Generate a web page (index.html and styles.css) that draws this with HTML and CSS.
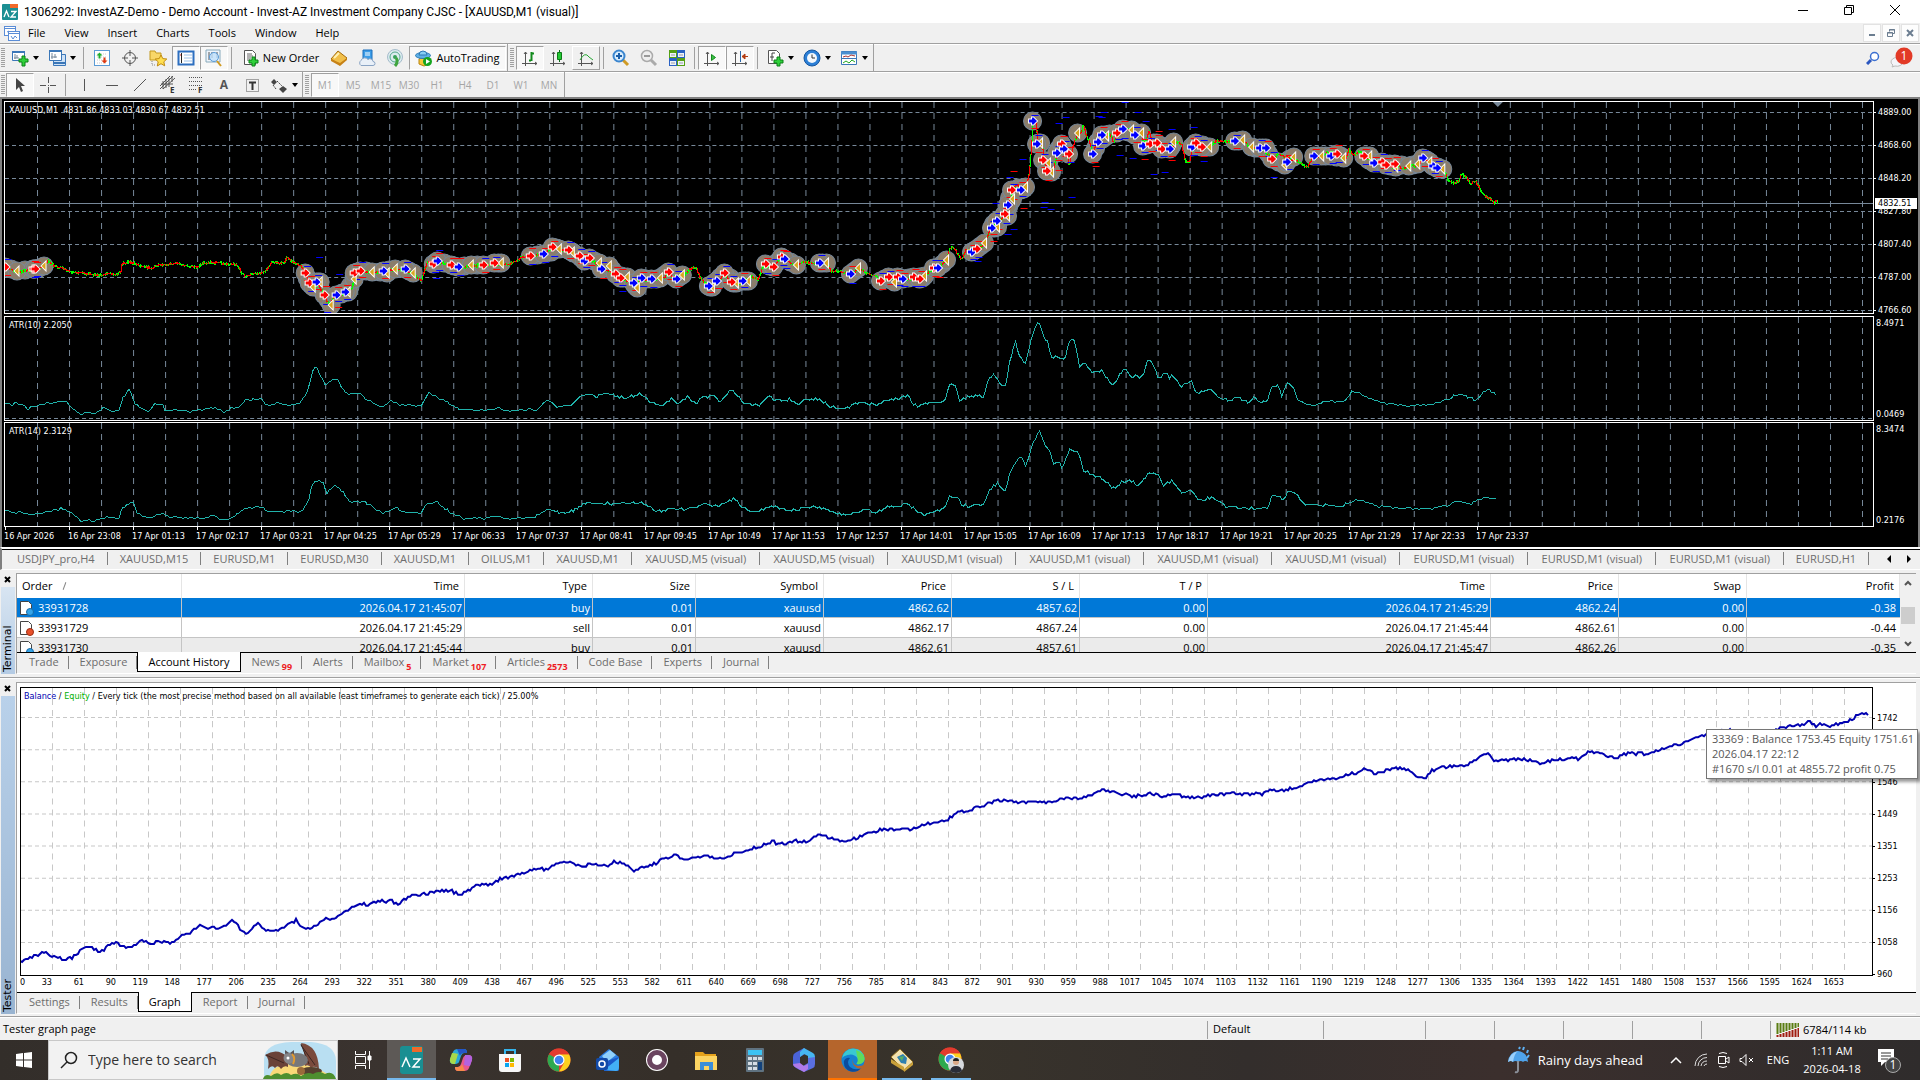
FILE: index.html
```html
<!DOCTYPE html>
<html lang="en">
<head>
<meta charset="utf-8">
<title>1306292: InvestAZ-Demo - Demo Account</title>
<link rel="stylesheet" href="styles.css">
</head>
<body>
<header class="titlebar">
  <svg class="app-logo" width="16" height="16" viewBox="0 0 16 16"><rect width="16" height="16" rx="1" fill="#1b8f93"/><rect x="8" width="8" height="4" fill="#f26a2a"/><path d="M2 13l2.500-6 2.500 6M9 7.500h5l-5 5.500h5" fill="none" stroke="#fff" stroke-width="1.300"/></svg>
  <h1>1306292: InvestAZ-Demo - Demo Account - Invest-AZ Investment Company CJSC - [XAUUSD,M1 (visual)]</h1>
  <div class="win-controls">
    <button aria-label="Minimize"><svg width="12" height="12"><path d="M1 6.500h10" stroke="#000"/></svg></button>
    <button aria-label="Restore"><svg width="12" height="12" fill="none" stroke="#000"><path d="M1.500 3.500h7v7h-7zM3.500 3.500v-2h7v7h-2"/></svg></button>
    <button aria-label="Close"><svg width="12" height="12" stroke="#000"><path d="M1 1l10 10M11 1L1 11"/></svg></button>
  </div>
</header>

<nav class="menubar">
  <svg class="app-logo" width="16" height="16" viewBox="0 0 16 16" fill="#fff" stroke="#5b8dd6"><rect x=".5" y="1.500" width="11" height="9"/><path d="M.5 3.500h11M3 7l2-1 2 2"/><rect x="4.500" y="6.500" width="11" height="9"/><path d="M4.500 8.500h11M7 11l2 3 2-3 2 2" fill="none"/></svg>
  <button>File</button><button>View</button><button>Insert</button><button>Charts</button><button>Tools</button><button>Window</button><button>Help</button>
  <div class="mdi-controls">
    <button aria-label="Minimize chart"><svg width="10" height="10"><path d="M2 7h6" stroke="#6b7d90" stroke-width="2"/></svg></button>
    <button aria-label="Restore chart"><svg width="10" height="10" fill="none" stroke="#6b7d90"><path d="M1.500 4.500h5v4h-5zM1 5h6M3.500 3.500v-2h5v4h-2M3 2h6"/></svg></button>
    <button aria-label="Close chart"><svg width="10" height="10" stroke="#6b7d90" stroke-width="2"><path d="M2 2l6 6M8 2L2 8"/></svg></button>
  </div>
</nav>

<div class="toolbar toolbar-main">
  <div class="group">
    <i class="grip"></i>
    <button class="tool drop" aria-label="New chart"><svg width="18" height="18" fill="none"><path d="M1.500 2.500h12v9h-12z" fill="#fff" stroke="#3b77b8"/><path d="M1 3h13" stroke="#3b77b8" stroke-width="2"/><path d="M4 5v5M3 9h5M6 6v3" stroke="#789"/><path d="M11 7h3v3h3v3h-3v4h-3v-4H8v-3h3z" fill="#2fd03a" stroke="#0a8016"/></svg></button>
    <button class="tool drop" aria-label="Profiles"><svg width="18" height="18"><path d="M5.500 5.500h12v11h-12z" fill="#cfe2f6" stroke="#3b77b8"/><path d="M1.500 1.500h12v10h-12z" fill="#fff" stroke="#3b77b8"/><path d="M1 2h13M6 14h11" stroke="#3b77b8" stroke-width="2"/><path d="M4 4v6M3 8h6M7 5v4" stroke="#789"/></svg></button>
    <i class="sep"></i>
    <button class="tool" aria-label="Market Watch"><svg width="18" height="18"><rect x="1.500" y="1.500" width="15" height="15" fill="#fff" stroke="#5b9bd5"/><path d="M4 5h9M4 8h9M4 11h9M4 14h9" stroke="#ccc" stroke-dasharray="1 1"/><path d="M6.500 3.500l3 3h-2v3h-2v-3h-2z" fill="#1fae2c"/><path d="M11.500 14.500l3-3h-2v-3h-2v3h-2z" fill="#e03a12"/></svg></button>
    <button class="tool" aria-label="Data Window"><svg width="18" height="18" fill="none" stroke="#555"><circle cx="9" cy="9" r="5.500"/><path d="M9 1v6M9 11v6M1 9h6M11 9h6"/></svg></button>
    <button class="tool" aria-label="Navigator"><svg width="18" height="18"><path d="M1 2h5l1 2h5v7H1z" fill="#f8d768" stroke="#c39a20"/><path d="M3 12v4h4" stroke="#888" stroke-dasharray="1 1" fill="none"/><path d="M12 6l1.800 3.600 4 .4-3 2.800.9 4L12 14.700 8.300 17l.9-4.200-3-2.800 4-.4z" fill="#ffdf50" stroke="#c08a10"/></svg></button>
    <button class="tool pressed" aria-label="Terminal"><svg width="18" height="18"><rect x="1.500" y="2.500" width="15" height="13" fill="#fff" stroke="#2d6fc0" stroke-width="2"/><path d="M4.500 4v10" stroke="#222"/><path d="M7 6h8M7 9h8M7 12h8" stroke="#9cc1e8"/><path d="M3 6h1" stroke="#d22"/></svg></button>
    <button class="tool pressed" aria-label="Strategy Tester"><svg width="18" height="18"><path d="M1 1h14v12H1z" fill="#eef4fb" stroke="#8ab"/><path d="M4 3v8M7 3v6M12 3v6" stroke="#555"/><circle cx="9" cy="8" r="4.500" fill="#bfe0fb" fill-opacity=".8" stroke="#5a9bd8"/><path d="M12 12l4 5" stroke="#d19a20" stroke-width="2"/></svg></button>
    <i class="sep"></i>
    <button class="tool labelled order"><svg width="18" height="18"><path d="M2.500 1.500h8l3 3v11h-11z" fill="#fff" stroke="#555"/><path d="M5 5h5M5 7h6M5 9h4M5 11h3" stroke="#666"/><path d="M10 8h3v3h3v3h-3v3h-3v-3H7v-3h3z" fill="#2fd03a" stroke="#0a8016"/></svg><span>New Order</span></button>
    <button class="tool" aria-label="MetaEditor"><svg width="18" height="18"><path d="M1 10L8 2l9 7-7 7z" fill="#f1bf4a" stroke="#a66c0b"/><path d="M1 10l9 4 7-5v2l-7 6-9-5z" fill="#c78216"/><path d="M4 9l5-5" stroke="#fff2b5" stroke-width="2"/></svg></button>
    <button class="tool" aria-label="Virtual hosting"><svg width="18" height="18"><path d="M5 1h9v10H5z" fill="#3c9de8" stroke="#1a6fbc"/><path d="M7 4h5M7 6h5" stroke="#fff"/><path d="M3 16.500a3 3 0 010-5 4 4 0 017-1 3 3 0 015 2 2 2 0 010 4z" fill="#e9f0f8" stroke="#8aa4c4"/></svg></button>
    <button class="tool" aria-label="Signals"><svg width="18" height="18" fill="none"><circle cx="9" cy="8" r="7.500" fill="#dcebf0" stroke="#a5bccb"/><circle cx="9" cy="8" r="5" stroke="#54a88c"/><circle cx="9" cy="8" r="2" fill="#37a05a"/><path d="M10 9c2 2 1 6-1 8" stroke="#3fa53d" stroke-width="3"/></svg></button>
    <button class="tool labelled pressed auto"><svg width="18" height="18"><path d="M4 10l5-3 5 3v5l-5 2-5-2z" fill="#f7c83a" stroke="#b88410"/><ellipse cx="8" cy="6.500" rx="7.500" ry="3" fill="#5eb0e6" stroke="#2b78b5"/><path d="M4 6a4 4 0 018 0z" fill="#86cdf5" stroke="#2b78b5"/><circle cx="12.500" cy="12.500" r="4.500" fill="#16a51f"/><path d="M11 10l4 2.500-4 2.500z" fill="#fff"/></svg><span>AutoTrading</span></button>
  </div>
  <div class="group charts">
    <i class="grip"></i>
    <button class="tool pressed" aria-label="Bar chart"><svg width="18" height="18" fill="none" stroke="#555"><path d="M4.500 3v14M1 14.500h15M3 5l1.500-2L6 5M14 13l2 1.500-2 1.500"/><path d="M10.500 3v9M8 11.500h2M11 4.500h2" stroke="#128a1c" stroke-width="2"/></svg></button>
    <button class="tool" aria-label="Candlesticks"><svg width="18" height="18" fill="none" stroke="#555"><path d="M4.500 3v14M1 14.500h15M3 5l1.500-2L6 5M14 13l2 1.500-2 1.500"/><path d="M10.500 1v12" stroke="#0b6b14"/><path d="M8.500 3.500h4v7h-4z" fill="#23c733" stroke="#0b7a16"/></svg></button>
    <button class="tool raised" aria-label="Line chart"><svg width="18" height="18" fill="none" stroke="#555"><path d="M4.500 3v14M1 14.500h15M3 5l1.500-2L6 5M14 13l2 1.500-2 1.500"/><path d="M3 11q5-9 9-3l4 3" stroke="#25a733"/></svg></button>
    <i class="sep"></i>
    <button class="tool" aria-label="Zoom in"><svg width="18" height="18"><path d="M11 11l5 5" stroke="#cf9a25" stroke-width="3"/><circle cx="7" cy="7" r="5.500" fill="#d9edfd" stroke="#3b86cf" stroke-width="2"/><path d="M4 7h6M7 4v6" stroke="#1b5faa" stroke-width="2"/></svg></button>
    <button class="tool" aria-label="Zoom out"><svg width="18" height="18"><path d="M11 11l5 5" stroke="#aaa" stroke-width="3"/><circle cx="7" cy="7" r="5.500" fill="#eee" stroke="#aaa" stroke-width="1.500"/><path d="M4 7h6" stroke="#999" stroke-width="2"/></svg></button>
    <button class="tool" aria-label="Tile windows"><svg width="18" height="18"><path d="M1 1h8v8H1zM9 9h8v8H9z" fill="#55a015"/><path d="M9 1h8v8H9zM1 9h8v8H1z" fill="#2a62c4"/><path d="M2 4h6v4H2zM10 4h6v4h-6zM2 12h6v4H2zM10 12h6v4h-6z" fill="#eef3f8"/><path d="M3 6h4M11 6h4M3 14h4M11 14h4" stroke="#99a"/></svg></button>
    <i class="sep"></i>
    <button class="tool pressed" aria-label="Auto scroll"><svg width="18" height="18" fill="none" stroke="#555"><path d="M4.500 3v14M1 14.500h15M3 5l1.500-2L6 5M14 13l2 1.500-2 1.500"/><path d="M8.500 5.500l4 3-4 3z" fill="#3bc046" stroke="#128a1c"/></svg></button>
    <button class="tool pressed" aria-label="Chart shift"><svg width="18" height="18" fill="none" stroke="#555"><path d="M4.500 3v14M1 14.500h15M3 5l1.500-2L6 5M14 13l2 1.500-2 1.500"/><path d="M9.500 2v11" stroke="#2b66a8"/><path d="M11 7.500h6M14 5l-3 2.500L14 10z" fill="#b23a10" stroke="#b23a10"/></svg></button>
    <i class="sep"></i>
    <button class="tool drop" aria-label="Indicators"><svg width="18" height="18"><path d="M2.500 1.500h8l3 3v10h-11z" fill="#fff" stroke="#555"/><path d="M9 4H6v8M4 8h4" stroke="#444" fill="none"/><path d="M11 8h3v3h3v3h-3v3h-3v-3H8v-3h3z" fill="#2fd03a" stroke="#0a8016"/></svg></button>
    <button class="tool drop" aria-label="Periods"><svg width="18" height="18"><circle cx="9" cy="9" r="8" fill="#2c7fd6" stroke="#1556a0"/><circle cx="9" cy="9" r="5" fill="#f4f8fc"/><path d="M9 5.500V9h3" stroke="#333" fill="none"/></svg></button>
    <button class="tool drop" aria-label="Templates"><svg width="18" height="18"><path d="M1.500 2.500h15v13h-15z" fill="#fff" stroke="#3b77b8"/><path d="M1 4h16" stroke="#4a8fd0" stroke-width="3"/><path d="M2 9.500h14" stroke="#3b77b8"/><path d="M3 8l3-1 2 1 3-2 4 1" stroke="#a33" fill="none"/><path d="M3 14l3-2 3 2 3-3 3 2" stroke="#2a2" fill="none"/></svg></button>
  </div>
  <div class="toolbar-right">
    <button aria-label="Search"><svg width="14" height="14"><circle cx="8.500" cy="5.500" r="4" fill="#fff" stroke="#3b6fd0" stroke-width="1.500"/><path d="M5 9l-4 4" stroke="#2b57c0" stroke-width="3"/></svg></button>
    <button aria-label="Messages"><svg width="26" height="22"><path d="M3 15a6 4.500 0 1112 0 6 4.500 0 01-8 4l-3 1 1-2a4 4 0 01-2-3z" fill="#f4f4f8" stroke="#bbb"/><circle cx="16" cy="9" r="8.500" fill="#e23a26"/><text x="16" y="13" text-anchor="middle" fill="#fff" font-size="12">1</text></svg></button>
  </div>
</div>

<div class="toolbar toolbar-draw">
  <div class="group">
    <i class="grip"></i>
    <button class="tool pressed" aria-label="Cursor"><svg width="18" height="18"><path d="M5 2v12l3-3 2 5 2-1-2-5h4z" fill="#444"/></svg></button>
    <button class="tool" aria-label="Crosshair"><svg width="18" height="18" stroke="#555"><path d="M9.500 1v6M9.500 11v6M1 9.500h6M11 9.500h6M9 9.500h1"/></svg></button>
    <i class="sep"></i>
    <button class="tool" aria-label="Vertical line"><svg width="18" height="18" stroke="#555"><path d="M9.500 3v12"/></svg></button>
    <button class="tool" aria-label="Horizontal line"><svg width="18" height="18" stroke="#555"><path d="M3 9.500h12"/></svg></button>
    <button class="tool" aria-label="Trendline"><svg width="18" height="18" stroke="#555"><path d="M3 15L15 3"/></svg></button>
    <button class="tool" aria-label="Equidistant channel"><svg width="18" height="20" stroke="#555"><path d="M1 11L11 1M1 14L14 1M4 14L16 3M4 6v8M7 4v9M10 3v9M13 1v6M2 9h12"/><text x="11" y="18" font-size="8" font-weight="700" stroke="none" fill="#333">E</text></svg></button>
    <button class="tool" aria-label="Fibonacci"><svg width="18" height="20" stroke="#555" stroke-dasharray="1 1"><path d="M2 2.500h13M2 6.500h13M2 10.500h13M2 14.500h8"/><text x="11" y="18" font-size="8" font-weight="700" stroke="none" fill="#333">F</text></svg></button>
    <button class="tool letter">A</button>
    <button class="tool" aria-label="Text label"><svg width="18" height="18" fill="none" stroke="#555"><path d="M3.500 3.500h12v12h-12z" stroke-dasharray="1 1"/><path d="M6 6.500h7M9.500 6v8" stroke="#333" stroke-width="2"/></svg></button>
    <button class="tool drop" aria-label="Arrows"><svg width="18" height="18" fill="#444"><path d="M4 3l3 3-3 3-3-3zM13 10l4 3-4 4-4-4z"/><path d="M7 5l5 5M3 9l3 4" fill="none" stroke="#444" stroke-dasharray="2 1"/></svg></button>
  </div>
  <div class="group periods">
    <i class="grip"></i>
    <button class="tool pressed">M1</button><button class="tool">M5</button><button class="tool">M15</button><button class="tool">M30</button><button class="tool">H1</button><button class="tool">H4</button><button class="tool">D1</button><button class="tool">W1</button><button class="tool">MN</button>
  </div>
</div>

<main class="chart-window">
  <div class="panel price-panel">
    <svg id="price" viewBox="5 102 1867 211" preserveAspectRatio="none"></svg>
    <p class="panel-title">XAUUSD,M1&nbsp; 4831.86 4833.03 4830.67 4832.51</p>
  </div>
  <div class="axis price-axis">
    <ul><li>4889.00</li><li>4868.60</li><li>4848.20</li><li>4827.80</li><li>4807.40</li><li>4787.00</li><li>4766.60</li></ul>
    <span class="price-tag">4832.51</span>
  </div>
  <div class="panel atr-panel">
    <svg id="atr10" viewBox="5 317 1867 103" preserveAspectRatio="none"></svg>
    <p class="panel-title">ATR(10) 2.2050</p>
  </div>
  <div class="axis atr-axis"><span>8.4971</span><span>0.0469</span></div>
  <div class="panel atr-panel">
    <svg id="atr14" viewBox="5 423 1867 103" preserveAspectRatio="none"></svg>
    <p class="panel-title">ATR(14) 2.3129</p>
  </div>
  <div class="axis atr-axis"><span>8.3474</span><span>0.2176</span></div>
  <ol class="time-axis" id="time-axis"></ol>
</main>

<nav class="doc-tabs">
  <div class="doc-list">
    <button>USDJPY_pro,H4</button><button>XAUUSD,M15</button><button>EURUSD,M1</button><button>EURUSD,M30</button><button>XAUUSD,M1</button><button>OILUS,M1</button><button>XAUUSD,M1</button><button class="visual">XAUUSD,M5 (visual)</button><button class="visual">XAUUSD,M5 (visual)</button><button class="visual">XAUUSD,M1 (visual)</button><button class="visual">XAUUSD,M1 (visual)</button><button class="visual">XAUUSD,M1 (visual)</button><button class="visual">XAUUSD,M1 (visual)</button><button class="visual">EURUSD,M1 (visual)</button><button class="visual">EURUSD,M1 (visual)</button><button class="visual">EURUSD,M1 (visual)</button><button>EURUSD,H1</button><button>XAUUSD,M1</button>
  </div>
  <button class="scroll" aria-label="Scroll left"><svg width="6" height="8"><path d="M5 0v8L1 4z"/></svg></button>
  <button class="scroll" aria-label="Scroll right"><svg width="6" height="8"><path d="M1 0v8l4-4z"/></svg></button>
</nav>

<section class="dock terminal">
  <div class="rail"><button aria-label="Close terminal"><svg width="7" height="7" stroke="#000" stroke-width="2"><path d="M1 1l5 5M6 1L1 6"/></svg></button><span>Terminal</span></div>
  <div class="dock-body">
    <div class="history">
      <table>
        <colgroup><col class="c-order"><col class="c-time"><col class="c-mid"><col class="c-size"><col class="c-mid"><col class="c-mid"><col class="c-mid"><col class="c-mid"><col class="c-time"><col class="c-mid"><col class="c-mid"><col></colgroup>
        <thead><tr><th>Order <i class="sort"></i></th><th>Time</th><th>Type</th><th>Size</th><th>Symbol</th><th>Price</th><th>S / L</th><th>T / P</th><th>Time</th><th>Price</th><th>Swap</th><th>Profit</th></tr></thead>
        <tbody>
          <tr class="selected"><td><span class="order-no"><svg width="14" height="16"><path d="M.5 1.500h8l3 3v10H.5z" fill="#fff" stroke="#444"/><circle cx="10" cy="12" r="3.500" fill="#35a4e8" stroke="#146aa8"/></svg>33931728</span></td><td>2026.04.17 21:45:07</td><td>buy</td><td>0.01</td><td>xauusd</td><td>4862.62</td><td>4857.62</td><td>0.00</td><td>2026.04.17 21:45:29</td><td>4862.24</td><td>0.00</td><td>-0.38</td></tr>
          <tr><td><span class="order-no"><svg width="14" height="16"><path d="M.5 1.500h8l3 3v10H.5z" fill="#fff" stroke="#444"/><circle cx="10" cy="12" r="3.500" fill="#e8502a" stroke="#9c2c10"/></svg>33931729</span></td><td>2026.04.17 21:45:29</td><td>sell</td><td>0.01</td><td>xauusd</td><td>4862.17</td><td>4867.24</td><td>0.00</td><td>2026.04.17 21:45:44</td><td>4862.61</td><td>0.00</td><td>-0.44</td></tr>
          <tr class="alt"><td><span class="order-no"><svg width="14" height="16"><path d="M.5 1.500h8l3 3v10H.5z" fill="#fff" stroke="#444"/><circle cx="10" cy="12" r="3.500" fill="#35a4e8" stroke="#146aa8"/></svg>33931730</span></td><td>2026.04.17 21:45:44</td><td>buy</td><td>0.01</td><td>xauusd</td><td>4862.61</td><td>4857.61</td><td>0.00</td><td>2026.04.17 21:45:47</td><td>4862.26</td><td>0.00</td><td>-0.35</td></tr>
        </tbody>
      </table>
      <div class="scrollbar"><svg width="8" height="6" fill="none" stroke="#555" stroke-width="2"><path d="M1 5l3-3 3 3"/></svg><i></i><svg width="8" height="6" fill="none" stroke="#555" stroke-width="2"><path d="M1 1l3 3 3-3"/></svg></div>
    </div>
    <nav class="tabs"><button>Trade</button><button>Exposure</button><button class="active">Account History</button><button>News<sub>99</sub></button><button>Alerts</button><button>Mailbox<sub>5</sub></button><button>Market<sub>107</sub></button><button>Articles<sub>2573</sub></button><button>Code Base</button><button>Experts</button><button>Journal</button></nav>
  </div>
</section>
<div class="splitter"></div>

<section class="dock tester">
  <div class="rail"><button aria-label="Close tester"><svg width="7" height="7" stroke="#000" stroke-width="2"><path d="M1 1l5 5M6 1L1 6"/></svg></button><span>Tester</span></div>
  <div class="dock-body">
    <div class="equity">
      <div class="equity-plot">
        <svg id="equity" viewBox="21 688 1851 286" preserveAspectRatio="none"></svg>
        <p class="equity-title"><b>Balance</b> / <em>Equity</em> / Every tick (the most precise method based on all available least timeframes to generate each tick) / 25.00%</p>
      </div>
      <ul class="equity-axis"><li>1742</li><li>1644</li><li>1546</li><li>1449</li><li>1351</li><li>1253</li><li>1156</li><li>1058</li><li>960</li></ul>
      <ol class="trade-axis" id="trade-axis"></ol>
      <div class="tip" role="tooltip">33369 : Balance 1753.45 Equity 1751.61<br>2026.04.17 22:12<br>#1670 s/l 0.01 at 4855.72 profit 0.75</div>
    </div>
    <nav class="tabs"><button>Settings</button><button>Results</button><button class="active">Graph</button><button>Report</button><button>Journal</button></nav>
  </div>
</section>

<footer class="statusbar">
  <span class="help">Tester graph page</span>
  <span class="s-profile">Default</span><span class="s-time"></span><span class="s-cell"></span><span class="s-cell"></span><span class="s-cell"></span><span class="s-cell"></span><span class="s-cell"></span>
  <span class="s-net"><svg width="23" height="14" id="net"><path d="M1.500 0v11M4.500 0v10M7.500 0v9M10.500 0v8M13.500 0v7M16.500 0v6M19.500 0v5M22.500 0v4" stroke="#5a7d12" stroke-width="2"/><path d="M1.500 14v-2M4.500 14v-3M7.500 14v-4M10.500 14v-5M13.500 14v-6M16.500 14v-7M19.500 14v-8M22.500 14v-9" stroke="#a01c10" stroke-width="2"/></svg>6784/114 kb</span>
</footer>

<div class="taskbar">
  <button class="start" aria-label="Start"><svg width="16" height="16" fill="#fff"><path d="M0 2l7-1v6.500H0zM8 1l8-1v7.500H8zM0 8.500h7V15l-7-1zM8 8.500h8V16l-8-1z"/></svg></button>
  <div class="search">
    <svg width="18" height="18" fill="none" stroke="#222" stroke-width="1.500"><circle cx="11" cy="7" r="5.500"/><path d="M7 11l-6 6"/></svg>
    <input type="text" placeholder="Type here to search" aria-label="Type here to search">
    <svg class="art" width="76" height="38" viewBox="0 0 76 38"><path d="M3 38V18Q4 2 30 1h20Q75 3 75 20v18z" fill="#b9dff2"/><path d="M8 38Q10 22 34 23t38 15z" fill="#f9d978"/><path d="M27 16Q16 6 4 14q5 3 3 14 4-5 7-1 3-4 6 1 3-4 7-2z" fill="#6a4238"/><path d="M44 16Q42 6 40 2q17 2 18 26-5-4-8-1-2-4-6-2z" fill="#7a4a3c"/><path d="M40 3l8 20M5 14l18 8M40 4l14 20" stroke="#3d2622" fill="none"/><ellipse cx="36" cy="19" rx="11" ry="7" fill="#77777a"/><circle cx="28" cy="17" r="5.500" fill="#86868a"/><path d="M24 13l0-4 4 3zM29 12l4-3 0 5z" fill="#5a5558"/><path d="M31 13q4 4 1 10" stroke="#e09a30" stroke-width="2" fill="none"/><circle cx="27" cy="17" r="1.500" fill="#fff"/><ellipse cx="50" cy="30" rx="11" ry="4" fill="#55402f"/><circle cx="40" cy="30" r="4" fill="#9a6a3a"/><path d="M2 38q2-6 8-3 6-5 10-1 6-4 10 0 6-3 10 1 6-5 12-2 6-4 12 0 8-4 11 5z" fill="#4d8f2f"/></svg>
  </div>
  <button class="task" aria-label="Task View"><svg width="18" height="18" fill="none" stroke="#fff"><path d="M1.500 0v3.500h10V0M1.500 18v-3.500h10V18M1.500 5.500h10v7h-10zM15.500 0v18"/><path d="M14 5h3v4h-3z" fill="#fff"/></svg></button>
  <button class="task current" aria-label="InvestAZ"><svg width="23" height="28"><rect width="23" height="28" rx="3" fill="#1a8f92"/><rect x="12" y="1" width="10" height="5" fill="#ef6a2a"/><path d="M2 21l4-9 4 9M13 13h7l-7 8h7" fill="none" stroke="#fff" stroke-width="1.500"/></svg></button>
  <button class="task" aria-label="Copilot"><svg width="24" height="24"><path d="M5 16Q0 16 1 11L4 4q1-3 5-3h6q3 0 3 4h-3q-2 0-3 3l-2 6q-1 2-5 2z" fill="#2aa9d8"/><path d="M5 16Q0 16 1 11l2-6q3 0 6 1l-3 10z" fill="#a8d94a"/><path d="M8 1h7q3 0 3 4h-3q-3 0-4 3z" fill="#2456c8"/><path d="M19 7q5 0 4 5l-3 8q-1 3-5 3H9q-3 0-3-4h3q2 0 3-3l2-6q1-3 5-3z" fill="#e8588d"/><path d="M19 7q5 0 4 5l-2 6q-3 0-6-1l1-10z" fill="#b263e0"/><path d="M16 23H9q-3 0-3-4h3q3 0 4-3z" fill="#f7894a"/></svg></button>
  <button class="task" aria-label="Store"><svg width="24" height="24"><path d="M7 6V2h10v4" fill="none" stroke="#35b4ec" stroke-width="2"/><path d="M1 6h22v15q0 3-3 3H4q-3 0-3-3z" fill="#f7f7f7"/><path d="M7 10h4v4H7z" fill="#f05025"/><path d="M12 10h4v4h-4z" fill="#7eba02"/><path d="M7 15h4v4H7z" fill="#08a4ef"/><path d="M12 15h4v4h-4z" fill="#fdb900"/></svg></button>
  <button class="task" aria-label="Chrome"><svg width="24" height="24"><use href="#chrome"/></svg></button>
  <button class="task" aria-label="Outlook"><svg width="24" height="24"><path d="M3 9L13 1l10 8v12q0 2-2 2H9z" fill="#2a7de1"/><path d="M6 8l8-6 6 5-9 7z" fill="#8fd0fb"/><path d="M8 14l15-5v12q0 2-2 2H8z" fill="#1a59c8"/><path d="M8 22L23 10v9q0 4-3 4z" fill="#43b0f5"/><rect x="0" y="10" width="12" height="12" rx="2" fill="#124aa8"/><circle cx="6" cy="16" r="3" fill="none" stroke="#fff" stroke-width="1.500"/></svg></button>
  <button class="task" aria-label="Recorder"><svg width="24" height="24"><circle cx="12" cy="12" r="11" fill="#fff"/><circle cx="12" cy="12" r="7.500" fill="#fff" stroke="#6b4560" stroke-width="5"/></svg></button>
  <button class="task" aria-label="File Explorer"><svg width="24" height="24"><path d="M1 4h8l2 2h11v16H1z" fill="#e5a21c"/><path d="M1 8h22v14H1z" fill="#fcd462"/><path d="M6 14h13v8h-4v-4h-5v4H6z" fill="#3b8ed8"/></svg></button>
  <button class="task" aria-label="Calculator"><svg width="24" height="24"><rect x="3" y="0" width="18" height="24" rx="1" fill="#5f7280"/><path d="M5 2h14v5H5z" fill="#3cc3f2"/><path d="M5 9h4v3H5zM10 9h4v3h-4zM15 9h4v3h-4zM5 14h4v3H5zM10 14h4v3h-4zM5 19h4v3H5zM10 19h4v3h-4z" fill="#d5dde3"/><path d="M15 14h4v8h-4z" fill="#12427c"/></svg></button>
  <button class="task" aria-label="Microsoft 365"><svg width="24" height="24"><path d="M12 0L3 5q-2 1-2 4v7q0 2 3 4l4 2V9l8-5z" fill="#4a63d8"/><path d="M12 0l9 5q2 1 2 4v5l-7-4V8l-4-2-4 3V4z" fill="#46b6f0"/><path d="M23 9v7q0 3-2 4l-9 4-6-3 10-6v-5z" fill="#5a6fe0"/><path d="M8 15l4 3 4-2v5l-4 3-9-5q-2-1-2-3z" fill="#b07ae8"/></svg></button>
  <button class="task alert" aria-label="Edge"><svg width="24" height="24"><circle cx="12" cy="12" r="11.500" fill="#1582d2"/><path d="M1 10Q3 1 12 .5 23 1 23.500 11q-1 6-8 5 3-3 1-6-4-5-10-3-4 1-5.500 3z" fill="#39c8d2"/><path d="M15 2q9 3 8.500 10-2 5-8 4 2-3 1-6z" fill="#5fdc5b"/><path d="M9 10q-4 4 0 9 5 4 11 1-4 5-10 3.500Q2 21 3 13q2-4 6-3z" fill="#0c4c9c"/><path d="M12 11q-1 6 5 7 4 0 6-1l-1 3q-3 1-6 0-6-3-4-9z" fill="#b5652c"/></svg></button>
  <button class="task open" aria-label="Editor"><svg width="24" height="24"><path d="M1 9L10 1l13 13-9 8z" fill="#f3e2b0" stroke="#8a6a20"/><path d="M1 11v4l13 8v-4zM14 21l9-7v3l-9 7z" fill="#caa13a"/><path d="M7 9l6-3 4 4-1 6-5-1z" fill="#2f7fb0"/><path d="M9 9l5-1-2 5z" fill="#5bb060"/></svg></button>
  <button class="task open" aria-label="Chrome profile"><svg width="26" height="26"><use href="#chrome"/><circle cx="18" cy="18" r="8" fill="#d7dadd"/><path d="M12 24q1-5 6-5t6 5q-6 4-12 0z" fill="#2a2d38"/><circle cx="18" cy="15" r="3" fill="#d9a989"/><path d="M15 14q0-3 3-3t3 3z" fill="#222"/></svg></button>
  <div class="tray">
    <button class="weather"><svg width="24" height="28"><path d="M1 16Q2 6 11 5q9 1 10 11-3-2-5 0-2-2-5 0-3-2-5 0-2-2-5 0z" fill="#4fa3ea"/><path d="M6 16Q7 8 11 5q-8 2-10 11 3-2 5 0z" fill="#9cd0fa"/><path d="M11 15v9q0 3-3 2" stroke="#8a8f98" stroke-width="2" fill="none"/><path d="M12 3l1-2M16 4l1-3M20 7l1-3M20 12l2-3" stroke="#5fb2f5" stroke-width="2"/></svg>Rainy days ahead</button>
    <button class="chev" aria-label="Hidden icons"><svg width="12" height="8" fill="none" stroke="#fff" stroke-width="1.500"><path d="M1 7l5-5 5 5"/></svg></button>
    <button aria-label="Network"><svg width="14" height="14" fill="none" stroke="#ddd"><path d="M1 13A12 12 0 0113 1M4 13A9 9 0 0113 4.500M7 13a6 6 0 016-5M10 13a3 3 0 013-2"/></svg></button>
    <button aria-label="Meet now"><svg width="14" height="18" fill="none" stroke="#fff"><path d="M1.500 5.500h7v7h-7zM9 8l3-2v6l-3-2M2 2.500q4-2 8 0M2 15.500q4 2 8 0"/></svg></button>
    <button aria-label="Volume muted"><svg width="16" height="14" fill="none" stroke="#fff"><path d="M1 5.500h2l4-4v11l-4-4H1zM10 5l4 4M14 5l-4 4"/></svg></button>
    <button class="lang">ENG</button>
    <button class="clock">1:11 AM<br>2026-04-18</button>
    <button class="note" aria-label="Notifications"><svg width="26" height="30"><path d="M2 4h16v13H9l-4 4v-4H2z" fill="#fff"/><path d="M5 8h10M5 11h10M5 14h7" stroke="#333"/><circle cx="17" cy="20" r="7.500" fill="#444" stroke="#aaa"/><text x="17" y="24" text-anchor="middle" fill="#fff" font-size="12">1</text></svg></button>
  </div>
</div>
<svg width="0" height="0" class="defs" aria-hidden="true"><defs><g id="chrome"><circle cx="12" cy="12" r="11.500" fill="#e33b2e"/><path d="M12 12L2 6.300A11.500 11.500 0 0012 23.500z" fill="#2da94f"/><path d="M12 12l5 3-5 8.500A11.500 11.500 0 0022 6.300H12z" fill="#fdd01f"/><path d="M2 6.300A11.500 11.500 0 0122 6.300H12z" fill="#e33b2e"/><circle cx="12" cy="12" r="5.500" fill="#fff"/><circle cx="12" cy="12" r="4.300" fill="#3f82ee"/></g></defs></svg>
<script src="charts.js"></script>
</body>
</html>
```
FILE: styles.css
```css
* { box-sizing: border-box; }
body { margin: 0; min-height: 100vh; display: flex; flex-direction: column; background: #f0f0f0; color: #000; font: 11px/16px "Open Sans", "Noto Sans", sans-serif; }
button { appearance: none; border: 0; background: none; padding: 0; margin: 0; font: inherit; color: inherit; display: flex; align-items: center; justify-content: center; }
h1, p, ul, ol { margin: 0; padding: 0; list-style: none; font-weight: 400; }
svg { display: block; flex: none; }
.defs { position: absolute; }

.titlebar { display: flex; align-items: center; height: 23px; background: #fff; padding: 0 2px; }
.titlebar h1 { font: 12px/16px "Noto Sans", sans-serif; font-size: 12px; font-family: Roboto, "Open Sans", sans-serif; margin-left: 6px; flex: 1; }
.win-controls { display: flex; align-self: flex-start; }
.win-controls button { width: 46px; height: 20px; }
.menubar { display: flex; align-items: center; height: 20px; padding-left: 4px; }
.menubar > button { margin-left: 19px; }
.menubar > .app-logo + button { margin-left: 8px; }
.mdi-controls { margin-left: auto; display: flex; }
.mdi-controls button { width: 18px; height: 18px; margin-right: 1px; background: #fdfdfd; border: 1px solid #e2e2e2; }

.toolbar { display: flex; border-top: 1px solid #a0a0a0; box-shadow: inset 0 1px #fff; }
.toolbar-main { height: 28px; }
.toolbar-draw { height: 26px; }
.group { display: flex; align-items: center; border-right: 1px solid #a0a0a0; padding-right: 1px; }
.grip { width: 4px; height: 20px; margin: 0 1px; background: repeating-linear-gradient(#a0a0a0 0 1px, #f0f0f0 1px 2px); }
.charts .grip, .periods .grip { margin: 0 2px; }
.sep { width: 1px; height: 22px; margin: 0 4px 0 3px; background: #a0a0a0; }
.charts .sep { margin: 0 3px; }
.tool { width: 28px; height: 24px; }
.drop { width: 37px; gap: 4px; }
.drop::after { content: ""; border: 3px solid transparent; border-top: 4px solid #000; border-bottom: 0; }
.toolbar-draw .drop { width: 35px; }
.pressed { background: #f8f8f8; border: 1px solid; border-color: #a0a0a0 #fff #fff #a0a0a0; }
.raised { border: 1px solid; border-color: #fff #a0a0a0 #a0a0a0 #fff; }
.labelled { gap: 3px; }
.order { width: 89px; }
.auto { width: 97px; }
.letter { font-weight: 700; color: #555; font-size: 12px; }
.periods { color: #a5a5a5; font-size: 10px; }
.toolbar-right { margin-left: auto; display: flex; align-items: center; gap: 8px; padding-right: 6px; }

.chart-window { display: grid; grid-template-columns: minmax(0, 1fr) 44px; grid-template-rows: 213px 105px 105px 20px; row-gap: 1px; background: #000; color: #fff; border: solid #808080; border-width: 2px 2px 0; padding: 2px 0 0 2px; font: 9px/12px "DejaVu Sans Condensed", "DejaVu Sans", sans-serif; }
.panel { position: relative; border: 1px solid #fff; }
.price-panel { height: 213px; }
.atr-panel { margin-top: 1px; height: 105px; }
.panel svg { width: 100%; height: 100%; }
.panel-title { position: absolute; left: 4px; top: 2px; }
.axis { position: relative; }
.price-axis ul { padding-top: 5px; display: flex; flex-direction: column; gap: 21px; }
.price-axis li { display: flex; align-items: center; gap: 2px; }
.price-axis li::before { content: ""; width: 2px; height: 1px; background: #fff; }
.price-tag { position: absolute; left: 1px; right: 1px; top: 97px; height: 11px; line-height: 11px; padding-left: 3px; background: #fff; color: #000; }
.atr-axis { display: flex; flex-direction: column; justify-content: space-between; padding: 2px 0 0 2px; }
.time-axis { grid-column: 1 / -1; display: flex; overflow: hidden; }
.time-axis li { flex: 0 0 64px; white-space: nowrap; padding-top: 1px; }
.time-axis li::before { content: ""; display: block; width: 1px; height: 3px; background: #fff; margin: -1px 0 0 1px; }

.doc-tabs { display: flex; height: 23px; margin-bottom: 3px; border-top: 2px solid #fff; border-bottom: 1px solid #fff; border-left: 2px solid #808080; box-shadow: inset 0 1px #000; color: #6d6d6d; padding-left: 3px; }
.doc-list { display: flex; flex: 1; min-width: 0; overflow: hidden; }
.doc-list button { position: relative; flex: none; padding: 0 13px 0 12px; }
.doc-list .visual { width: 128px; padding: 0; }
.doc-list button::after { content: ""; position: absolute; right: 0; top: 3px; height: 13px; width: 1px; background: #808080; }
.scroll { width: 20px; padding-right: 2px; }

.dock { display: flex; }
.rail { width: 16px; display: flex; flex-direction: column; align-items: center; }
.rail button { height: 14px; width: 14px; padding: 0 1px 2px 0; }
.rail span { flex: 1; width: 14px; line-height: 14px; writing-mode: vertical-rl; transform: rotate(180deg); padding-top: 2px; font-family: "DejaVu Sans", sans-serif; background: linear-gradient(#b4cbe4, #d8e5f2); }
.tester .rail span { background: linear-gradient(#99b4d1, #b9d1ea); }
.dock-body { flex: 1; min-width: 0; display: flex; flex-direction: column; border-top: 1px solid #a0a0a0; border-left: 1px solid #a0a0a0; border-bottom: 1px solid #fff; margin-right: 4px; }
.history { display: flex; height: 78px; overflow: hidden; background: #fff; }
table { flex: 1; min-width: 0; table-layout: fixed; border-collapse: separate; border-spacing: 0; text-align: right; height: 84px; }
.c-order { width: 165px; } .c-time { width: 283px; } .c-mid { width: 128px; } .c-size { width: 103px; }
th { height: 24px; font-weight: 400; padding: 0 5px; border-right: 1px solid #e5e5e5; }
td { height: 20px; padding: 0 2px 0 3px; border-right: 1px solid #c4c4c4; border-bottom: 1px solid #c4c4c4; line-height: 18px; }
td:last-child { padding-right: 4px; border-right: 0; }
th:first-child, td:first-child { text-align: left; }
.sort { display: inline-block; width: 1px; height: 8px; margin-left: 9px; background: #888; transform: rotate(20deg); }
.order-no { display: flex; align-items: center; gap: 4px; }
.selected td { background: #0078d7; color: #fff; }
.alt td { background: #ebebeb; }
.scrollbar { width: 16px; background: #f0f0f0; display: flex; flex-direction: column; align-items: center; padding: 6px 0 5px; }
.scrollbar i { width: 14px; height: 17px; margin: 21px 0 auto; background: #cdcdcd; }
.tabs { display: flex; height: 21px; border-top: 1px solid #000; color: #6d6d6d; padding-left: 1px; align-items: flex-start; }
.tabs button { position: relative; height: 18px; padding: 0 10px 0 11px; }
.tabs button::after { content: ""; position: absolute; right: 0; top: 3px; height: 13px; width: 1px; background: #808080; }
.tabs .active { height: 20px; margin-top: -1px; padding: 0 10px; background: #fff; color: #000; border: 1px solid #000; border-top: 0; }
.tabs .active::after { display: none; }
sub { align-self: flex-end; font: 700 9px/9px "Open Sans", sans-serif; color: #ee1c24; margin-left: 2px; vertical-align: baseline; }
.splitter { height: 8px; border-top: 3px solid #f0f0f0; border-bottom: 3px solid #f0f0f0; background: linear-gradient(#a0a0a0 50%, #fff 50%); }

.tester { flex: 1; }
.equity { position: relative; flex: 1; display: grid; grid-template: minmax(0, 1fr) 16px / minmax(0, 1fr) 43px; background: #fff; padding: 4px 0 0 3px; font: 9px/12px "DejaVu Sans Condensed", "DejaVu Sans", sans-serif; }
.equity-plot { position: relative; border: 1px solid #000; }
.equity-plot svg { position: absolute; inset: 0; width: 100%; height: 100%; }
.equity-title { position: absolute; left: 3px; top: 2px; }
.equity-title b { font-weight: 400; color: #0000b0; }
.equity-title em { font-style: normal; color: #00b000; }
.equity-axis { grid-row: 1 / 3; grid-column: 2; padding-top: 15px; display: flex; flex-direction: column; height: 303px; }
.equity-axis li { height: 32px; display: flex; align-items: center; gap: 2px; }
.equity-axis li::before { content: ""; width: 2px; height: 1px; background: #000; }
.trade-axis { grid-row: 2; display: flex; }
.trade-axis li { flex: 0 0 32px; text-align: right; }
.trade-axis .origin { width: 0; min-width: 0; flex-basis: 0; text-align: left; }
.tip { position: absolute; right: -2px; top: 46px; width: 212px; height: 50px; padding: 1px 0 0 5px; background: #fff; border: 1px solid #767676; box-shadow: 3px 3px 3px rgba(0, 0, 0, .4); color: #575757; font: 11px/15px "Open Sans", sans-serif; white-space: nowrap; }

.statusbar { display: flex; align-items: center; height: 26px; padding-top: 5px; box-shadow: inset 0 2px #f0f0f0, inset 0 3px #a0a0a0, inset 0 4px #fff; }
.statusbar span { border-left: 1px solid #a0a0a0; height: 18px; padding-left: 5px; }
.statusbar .help { flex: 1; border: 0; padding-left: 3px; }
.statusbar .s-profile { width: 116px; }
.statusbar .s-time { width: 102px; }
.statusbar .s-cell { width: 69px; }
.statusbar .s-net { width: 150px; display: flex; align-items: center; gap: 4px; }

.taskbar { display: flex; height: 40px; color: #fff; background: linear-gradient(90deg, #332e2a, #3a332f 20%, #352f29 35%, #38332b 50%, #332e2c 65%, #3b2f2d 78%, #2f2c2c); font-size: 14px; }
.start { width: 48px; }
.search { width: 290px; display: flex; align-items: center; background: #f2f2f2; border: 1px solid #c8c8c8; padding-left: 11px; gap: 10px; }
.search input { flex: 1; min-width: 0; border: 0; outline: 0; padding: 0; background: none; font: 14px/20px "Open Sans", sans-serif; color: #333; }
.search input::placeholder { color: #333; opacity: 1; }
.task { width: 49px; }
.current { background: #5d5956; box-shadow: inset 0 -2px #76b9ed; }
.alert { background: #b5652c; box-shadow: inset 0 -2px #ff7300; }
.open { background: linear-gradient(#76b9ed, #76b9ed) center bottom / 40px 2px no-repeat; }
.tray { margin-left: auto; display: flex; align-items: center; font-size: 11px; padding-right: 18px; }
.tray button { height: 40px; width: 23px; }
.tray .weather { width: auto; gap: 7px; font-size: 13px; margin-right: 20px; }
.tray .chev { width: 26px; }
.tray .lang { width: 40px; }
.tray .clock { width: 68px; line-height: 18px; }
.tray .note { width: 26px; margin-left: 10px; }
```
FILE: charts.js
```js
const NS = 'http://www.w3.org/2000/svg';
let seed = 7;
const rnd = () => (seed = (seed * 16807) % 2147483647) / 2147483647;

function add(svg, tag, attrs) {
  const el = document.createElementNS(NS, tag);
  for (const k in attrs) el.setAttribute(k, attrs[k]);
  svg.appendChild(el);
  return el;
}

// Each series is stored as sections, with its own origin and units per pixel.
function read(section, fields = 2) {
  const [x0, y0, sx, sy, text] = section;
  return text.trim().split(/\s+/).map(p => {
    const a = p.split(',');
    const pt = [x0 + a[0] / sx, y0 + a[1] / sy];
    return fields === 3 ? [...pt, a[2]] : pt;
  });
}
const readAll = (sections, f) => sections.flatMap(s => read(s, f));

function sample(points, step, noise) {
  const out = [];
  let i = 0;
  for (let x = points[0][0]; x <= points[points.length - 1][0]; x += step) {
    while (i < points.length - 2 && points[i + 1][0] < x) i++;
    const [xa, ya] = points[i], [xb, yb] = points[i + 1];
    const t = Math.min(1, (x - xa) / (xb - xa || 1));
    out.push([Math.round(x), Math.round(ya + (yb - ya) * t + (rnd() - 0.5) * noise)]);
  }
  return out;
}
const toPath = pts => 'M' + pts.map(p => p.join(' ')).join('L');

function grid(svg, x0, x1, y0, y1, rows, first, color) {
  let v = '', h = '';
  for (let x = first; x < x1; x += 32) v += `M${x}.5 ${y0}V${y1}`;
  for (const y of rows) h += `M${x0} ${y}.5H${x1}`;
  add(svg, 'path', { d: v, stroke: color, 'stroke-dasharray': '6 5' });
  if (h) add(svg, 'path', { d: h, stroke: color, 'stroke-dasharray': '4 3' });
}

const price = document.getElementById('price');
grid(price, 5, 1872, 102, 313, [112, 145, 178, 211, 244, 277, 310], 37, '#778899');
add(price, 'path', { d: 'M5 203.5H1872', stroke: '#778899' });
add(price, 'path', { d: 'M1492 102h10l-5 5z', fill: '#778899' });

const quotes = readAll([
  [0, 220, 2.45, 3, `12,142 30,150 45,155 60,150 85,150 100,140 115,122 130,135 150,143 170,153 200,157 235,165 260,160 285,162 293,155 297,130 315,125 330,130 350,140 370,142 385,132 410,133 430,127 450,135 480,140 500,127 520,125 550,132 570,130 583,140 590,158 600,170 615,160 630,162 650,148 665,125 690,127 704,110 715,125 735,135 745,158 755,190 765,205 775,190 790,220 805,255 815,230 830,225 845,215 860,205 867,165 880,150 900,155 940,153 970,148 995,150 1015,165 1030,182 1038,150 1045,125 1065,125 1085,128 1105,135 1120,142 1150,135 1180,135 1215,132 1250,130 1275,112 1298,108 1330,100 1350,78 1375,88 1395,92 1415,108 1445,118 1470,140 1500,160 1520,175 1550,190`],
  [640, 100, 2.45, 3, `0,540 25,537 50,535 68,520 88,535 105,525 120,505 135,500 145,530 165,560 185,545 205,520 220,545 235,550 255,540 270,530 288,535 298,500 325,500 345,470 360,485 380,495 400,485 430,490 455,490 465,510 500,515 515,520 535,505 555,520 575,525 590,545 610,530 640,538 665,535 690,535 705,515 725,505 745,480 755,440 765,445 775,465 785,475 795,445 815,455 840,430 850,395 865,375 885,350 895,315 905,290 908,265 920,250 932,272 942,258 948,225 953,160 958,70 965,60 970,130 980,125 985,180 995,210 1005,220 1015,170 1030,130 1040,150 1047,195 1055,140 1065,105 1075,95 1082,75 1090,110 1098,130 1105,160 1115,120 1130,105 1145,95 1155,125 1165,100 1180,85 1200,90 1212,105 1225,100 1230,135 1243,90 1250,130 1265,125 1278,148 1295,148 1308,125 1322,130 1332,185 1342,180 1350,140 1362,130 1380,138 1395,140 1405,120 1440,125 1455,122 1475,120 1490,140 1520,145 1545,178 1560,160`],
  [1300, 80, 2.529, 3, `0,250 12,262 25,235 50,225 70,215 90,220 110,240 118,205 130,225 145,215 160,228 180,240 200,248 230,258 260,262 290,255 310,235 330,255 355,265 370,298 385,310 398,300 402,282 415,288 425,308 440,305 450,325 462,345 475,355 485,368 492,360 497,375`]
]);
const marks = readAll([
  [0, 220, 2.45, 3, `12,142,r 42,152,y 80,147,r 86,148,r 107,137,y 747,160,r 757,190,r 768,200,y 785,187,y 775,187,b 793,226,r 812,256,y 853,215,y 823,225,b 846,216,b 868,178,y 868,158,r 881,152,r 912,155,y 948,158,y 938,154,b 968,148,y 1011,158,y 992,148,b 1062,133,r 1070,123,b 1104,135,r 1122,142,b 1153,135,y 1184,136,r 1228,130,y 1210,130,r 1298,108,r 1331,102,b 1370,88,y 1353,82,r 1402,95,y 1392,91,r 1418,108,r 1430,122,b 1443,115,r 1468,130,y 1473,148,b 1492,138,y 1506,162,r 1535,172,y 1520,175,r 1560,205,y 1550,190,b`],
  [640, 100, 2.45, 3, `2,535,b 28,538,b 50,535,y 68,517,r 88,538,b 103,525,y 177,562,y 166,558,b 185,544,b 205,520,r 235,550,y 222,545,r 264,542,y 250,542,b 306,493,r 325,500,r 345,470,r 352,478,b 381,495,y 455,490,y 438,490,b 514,521,b 534,503,y 588,544,r 608,532,r 623,545,y 630,530,r 643,538,b 668,532,r 697,528,y 683,538,r 718,504,r 728,504,b 750,480,y 812,457,b 822,448,r 842,430,y 875,382,y 860,384,b 872,362,b 898,348,y 892,343,r 911,298,y 900,315,b 908,270,r 943,260,y 932,271,b 960,64,b 980,128,y 971,131,b 1000,190,y 985,180,r 1006,215,y 995,213,r 1018,160,b 1031,132,r 1036,148,b 1049,162,r 1070,100,y 1108,162,b 1120,125,b 1142,107,y 1130,105,b 1167,98,r 1202,90,y 1180,88,b 1211,105,b 1228,100,y 1230,137,b 1248,132,r 1265,128,r 1276,148,r 1307,125,y 1296,148,b 1349,140,b 1360,130,r 1393,142,y 1375,140,r 1474,121,y 1455,123,b 1496,142,y 1516,145,b 1531,143,b 1546,178,r 1578,196,y 1582,185,b 1600,170,y`],
  [1300, 80, 2.529, 3, `33,229,b 52,227,y 76,229,b 108,235,y 92,222,r 175,228,y 160,229,r 184,250,b 204,245,r 240,262,y 214,254,r 238,252,r 272,257,y 297,253,y 309,235,b 327,245,y 333,258,b 359,266,y 345,265,b`]
], 3);

// Halos: one behind each mark, and one between marks that nearly touch.
const halo = (x, y) => add(price, 'circle', { cx: Math.round(x), cy: Math.round(y), r: 9, fill: '#8b7d6b', stroke: '#778899' });
marks.forEach(([x, y], i) => {
  const next = marks[i + 1];
  if (next && Math.hypot(next[0] - x, next[1] - y) < 17) halo((x + next[0]) / 2, (y + next[1]) / 2);
});
for (const [x, y] of marks) halo(x, y);

const bars = sample(quotes, 1, 1.6);
let wick = '', body = '';
bars.forEach(([x, y], i) => {
  const prev = i ? bars[i - 1][1] : y;
  const lo = Math.min(prev, y), hi = Math.max(prev, y);
  wick += `M${x}.5 ${lo - Math.floor(rnd() * 1.6)}V${hi + 1 + Math.floor(rnd() * 1.6)}`;
  if (rnd() > 0.35) body += `M${x}.5 ${lo}V${hi + 1}`;
});
add(price, 'path', { d: wick, stroke: '#0f0', 'shape-rendering': 'crispEdges' });
add(price, 'path', { d: body, stroke: '#f00', 'shape-rendering': 'crispEdges' });

// Stop and target levels, drawn as short dashes.
let blue = '', red = '';
for (const [x, y, t] of marks) {
  if (t === 'y') continue;
  const up = Math.round(y - 6 - rnd() * 3), dn = Math.round(y + 6 + rnd() * 3), px = Math.round(x - 1);
  if (rnd() > 0.5) { blue += `M${px} ${up}.5h7`; red += `M${px} ${dn}.5h7`; }
  else { red += `M${px} ${up}.5h7`; blue += `M${px} ${dn}.5h7`; }
}
for (const [x, y] of readAll([
  [640, 100, 2.45, 3, '905,232 937,178 1025,68 1042,52 1130,50 1123,48 1135,35 1187,7 1217,37 1237,64 1055,292 990,307 988,322 1004,328 1173,166 1206,175 1256,222 1283,217 1356,82 898,403 826,484 915,388 1380,184 1302,88 1552,232 870,308'],
  [0, 220, 2.45, 3, '781,110 830,163 1076,91 1067,175 1525,214 800,277']
])) blue += `M${Math.round(x) - 3} ${Math.round(y)}.5h7`;
for (const [x, y] of readAll([
  [640, 100, 2.45, 3, '915,214 938,325 866,424 1114,199 1236,178 1302,181 1025,211 1270,94'],
  [0, 220, 2.45, 3, '799,199 829,260']
])) red += `M${Math.round(x) - 3} ${Math.round(y)}.5h7`;
add(price, 'path', { d: blue, stroke: '#00f' });
add(price, 'path', { d: red, stroke: '#f00' });

for (const [x, y, t] of marks) {
  const px = Math.round(x), py = Math.round(y);
  if (t === 'y') add(price, 'path', { d: `M${px - 3} ${py}l5 -5v10z`, fill: '#daa520', stroke: '#fff' });
  else add(price, 'path', { d: `M${px - 4} ${py - 2}h3v-2h2l4 4l-4 4h-2v-2h-3z`, fill: t === 'b' ? '#00f' : '#f00', stroke: '#fff' });
}

function atr(id, top, base, sections) {
  const svg = document.getElementById(id);
  grid(svg, 5, 1872, top, top + 103, base, 37, '#778899');
  add(svg, 'path', { d: toPath(sample(readAll(sections), 2, 2.6)), fill: 'none', stroke: '#20b2aa', 'shape-rendering': 'crispEdges' });
}
atr('atr10', 317, [418], [
  [0, 220, 2.45, 3, `12,548 25,550 45,552 68,566 80,556 105,553 120,545 140,547 160,543 172,558 185,574 197,585 210,576 232,582 250,562 265,570 292,573 300,535 317,508 328,548 345,563 365,575 380,552 397,553 405,572 440,570 475,574 500,565 530,565 550,580 565,566 585,560 600,540 640,536 655,556 682,546 705,555 732,550 745,530 755,505 765,450 775,443 785,470 797,500 810,480 825,475 840,510 855,524 880,517 900,540 935,558 960,542 985,555 1030,558 1050,518 1070,530 1095,545 1125,568 1185,570 1215,562 1250,574 1290,568 1315,570 1340,538 1365,562 1400,550 1425,525 1460,527 1490,520 1520,532 1555,528`],
  [640, 100, 2.45, 3, `0,880 12,888 22,908 50,915 75,898 95,910 115,892 135,910 155,890 180,888 195,904 220,868 235,882 250,908 290,915 315,892 345,902 368,898 385,915 405,898 435,898 460,915 487,928 515,918 540,905 580,915 600,900 640,895 655,882 665,908 680,920 715,906 745,904 755,855 770,855 782,905 800,890 842,888 850,845 865,818 878,850 895,855 905,780 918,725 930,775 944,790 957,715 970,675 978,668 988,715 997,725 1005,770 1040,775 1048,725 1060,715 1070,760 1075,803 1088,788 1105,818 1130,810 1145,840 1160,855 1175,820 1187,805 1197,828 1230,830 1245,772 1256,800 1270,835 1287,815 1297,840 1302,822 1325,860 1348,842 1360,880 1395,868 1415,892 1445,900 1465,892 1490,908 1500,892 1520,910 1537,900 1543,860 1562,855`],
  [0, 0, 0.8167, 0.8167, `1046,325 1050,314 1055,314 1059,326 1070,331 1082,327 1095,329 1105,319 1112,323 1125,328 1140,331 1155,331 1170,330 1180,326 1192,322 1205,327 1213,318 1222,322`]
]);
atr('atr14', 423, [], [
  [0, 220, 2.45, 3, `12,872 35,874 70,885 100,878 125,872 150,866 172,873 185,890 197,903 240,900 265,890 292,895 300,862 325,845 335,875 350,890 370,893 385,880 400,880 412,893 440,893 480,895 520,888 555,900 575,888 600,866 635,858 660,876 700,872 735,878 755,845 765,790 790,780 800,820 818,795 840,815 855,845 890,843 915,865 940,880 970,863 1000,878 1030,880 1048,850 1070,845 1105,880 1135,893 1185,895 1215,887 1250,897 1310,888 1345,865 1370,880 1395,878 1430,850 1500,850 1560,850`],
  [640, 100, 2.45, 3, `0,1205 15,1212 40,1235 85,1225 105,1230 130,1222 160,1212 190,1218 230,1195 245,1218 270,1236 325,1220 370,1230 430,1218 465,1235 495,1245 555,1228 570,1237 615,1218 655,1212 690,1243 745,1225 755,1190 775,1188 790,1218 840,1212 855,1170 875,1148 893,1178 905,1115 930,1065 945,1100 957,1040 978,988 992,1040 1000,1045 1012,1090 1025,1082 1033,1105 1050,1048 1073,1060 1085,1112 1130,1135 1162,1168 1180,1142 1205,1145 1220,1158 1245,1118 1265,1120 1280,1155 1300,1142 1325,1175 1350,1172 1370,1200 1400,1192 1435,1218 1485,1225 1535,1225 1545,1190 1562,1185`],
  [0, 0, 0.8167, 0.8167, `1047,408 1052,401 1057,403 1065,411 1080,413 1095,413 1108,408 1125,413 1145,415 1165,416 1180,413 1190,409 1200,411 1213,406 1222,408`]
]);

const equity = document.getElementById('equity');
grid(equity, 21, 1872, 688, 974, [717, 749, 781, 813, 845, 877, 909, 941], 52, '#c8c8c8');
const balance = sample(readAll([
  [0, 900, 2.45, 3, `50,183 75,168 115,155 122,167 150,172 168,176 190,160 205,138 225,138 232,148 255,148 275,124 290,130 310,137 335,133 350,114 365,130 390,122 415,128 440,110 457,96 465,100 487,75 500,73 510,80 540,82 570,62 583,65 590,90 605,96 635,68 655,92 675,93 700,78 727,57 742,85 765,82 800,53 810,58 850,30 885,8 900,12 920,2 960,0 973,12`],
  [0, 0, 0.8167, 0.8167, `330,734 338,731 350,729 360,727 368,727 376,730 385,725 395,721 402,722 410,717 420,715 430,712 440,709 447,710 455,705 465,704 475,707 485,705 495,707 502,703 512,706 518,711 525,708 533,706 540,702 552,697 560,702 570,700 580,699 590,701 605,695 618,692 630,687 640,689 650,686 660,687 668,682 678,684 690,687 700,684 710,680 720,677 745,677 755,673 765,671 775,669 780,664 790,662 800,659 815,653 825,654 840,655 855,655 865,652 880,652 890,650 900,645 915,648 925,650 940,648 950,650 960,649 980,651 990,649 1005,648 1030,648 1040,645 1050,645`],
  [1300, 540, 2.529, 3, `0,738 50,718 90,712 140,700 170,685 185,700 215,693 250,682 280,690 295,708 318,713 335,692 365,680 420,677 450,655 480,638 490,660 530,658 570,655 605,667 650,658 705,655 735,632 770,645 800,652 830,640 880,640 920,625 970,608 1000,595 1030,585 1080,570 1150,590 1215,565 1240,557 1270,555 1285,545 1300,548 1305,560 1315,545 1322,558 1330,550 1335,562 1355,555 1375,545 1395,538 1410,525 1430,520 1442,524`]
]), 2, 3);
add(equity, 'path', { d: toPath(balance), fill: 'none', stroke: '#0000b0', 'stroke-width': 2 });

const times = ['16 Apr 2026', '16 Apr 23:08'];
'01:13 02:17 03:21 04:25 05:29 06:33 07:37 08:41 09:45 10:49 11:53 12:57 14:01 15:05 16:09 17:13 18:17 19:21 20:25 21:29 22:33 23:37'
  .split(' ').forEach(t => times.push('17 Apr ' + t));
document.getElementById('time-axis').innerHTML = times.map(t => `<li>${t}</li>`).join('');

const trades = '33 61 90 119 148 177 206 235 264 293 322 351 380 409 438 467 496 525 553 582 611 640 669 698 727 756 785 814 843 872 901 930 959 988 1017 1045 1074 1103 1132 1161 1190 1219 1248 1277 1306 1335 1364 1393 1422 1451 1480 1508 1537 1566 1595 1624 1653'.split(' ');
document.getElementById('trade-axis').innerHTML = '<li class="origin">0</li>' + trades.map(t => `<li>${t}</li>`).join('');
```
